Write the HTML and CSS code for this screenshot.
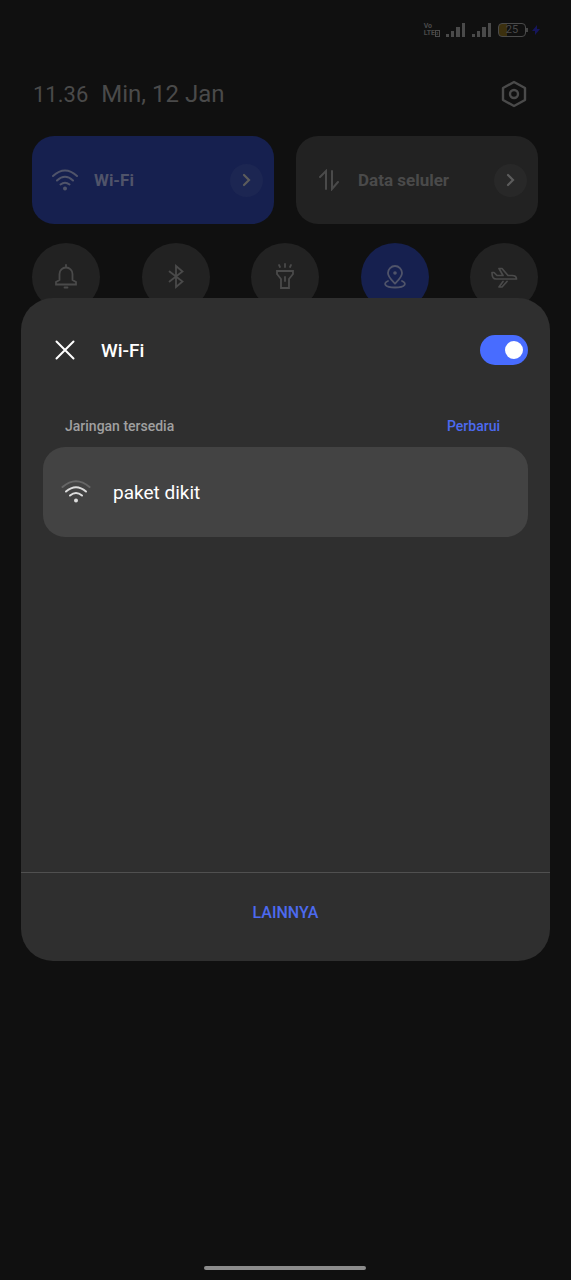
FILE: index.html
```html
<!DOCTYPE html>
<html lang="id">
<head>
<meta charset="utf-8">
<meta name="viewport" content="width=device-width, initial-scale=1">
<title>Wi-Fi</title>
<link rel="stylesheet" href="styles.css">
</head>
<body>
<main class="shade">
  <div class="status">
    <span class="volte"><span>Vo</span><span class="lte">LTE<span class="sim">2</span></span></span>
    <svg class="signal" width="20" height="16" viewBox="0 0 20 16" aria-hidden="true"><path d="M0 12h3v3H0zM5 9h3v6H5zM10 5h4v10h-4zM16 1h3v14h-3z"/></svg>
    <svg class="signal" width="20" height="16" viewBox="0 0 20 16" aria-hidden="true"><path d="M0 12h3v3H0zM5 9h3v6H5zM10 5h4v10h-4zM16 1h3v14h-3z"/></svg>
    <span class="battery"><span class="battery-value">25</span></span>
    <svg class="bolt" width="8" height="12" viewBox="0 0 8 12" aria-hidden="true"><path d="M5 1 0 7h3v4l5-6H5z"/></svg>
  </div>
  <header class="clock-row">
    <span class="clock">11.36</span>
    <span class="date">Min, 12 Jan</span>
    <button class="settings" aria-label="Setelan">
      <svg class="line" width="26" height="28" viewBox="0 0 26 28"><path stroke-width="2.4" stroke-linejoin="round" d="M13 2 24 8v12l-11 6L2 20V8z"/><circle cx="13" cy="14" r="4" stroke-width="2.4"/></svg>
    </button>
  </header>
  <div class="tiles">
    <button class="tile on">
      <svg class="line" width="26" height="22" viewBox="0 0 26 22" stroke-width="2"><path d="M1 7Q13-4 25 7M5 11.500Q13 4 21 11.500M8.500 15.500Q13 12 17.500 15.500"/><circle class="dot" cx="13" cy="19.500" r="2"/></svg>
      <span class="tile-label">Wi-Fi</span>
      <span class="more"><svg class="line" width="10" height="14" viewBox="0 0 10 14" stroke-width="2.200"><path d="m2 2 5 5-5 5"/></svg></span>
    </button>
    <button class="tile">
      <svg class="line" width="26" height="22" viewBox="0 0 26 22" stroke-width="2"><path d="m4 8 6-6v18M16 2v18l6-7"/></svg>
      <span class="tile-label">Data seluler</span>
      <span class="more"><svg class="line" width="10" height="14" viewBox="0 0 10 14" stroke-width="2.200"><path d="m2 2 5 5-5 5"/></svg></span>
    </button>
  </div>
  <div class="toggles">
    <button class="round" aria-label="Suara">
      <svg class="line" width="28" height="28" viewBox="0 0 28 28" stroke-width="1.800"><path d="M14 2v2M7.500 17v-6a6.500 6.500 0 0 1 13 0v6l3.500 2v2.500H4V19zM12.500 24.500h3"/></svg>
    </button>
    <button class="round" aria-label="Bluetooth">
      <svg class="line" width="28" height="28" viewBox="0 0 28 28" stroke-width="1.800"><path d="m7.500 8.500 13 10-6.500 5.500V3l6.500 5.500-13 10"/></svg>
    </button>
    <button class="round" aria-label="Senter">
      <svg class="line" width="28" height="28" viewBox="0 0 28 28" stroke-width="1.800"><path d="M14 1v3M8 2l1 2M20 2l-1 2M6 8h16v3l-4 5v9h-8v-9l-4-5zM14 14v4"/></svg>
    </button>
    <button class="round on" aria-label="Lokasi">
      <svg class="line" width="28" height="28" viewBox="0 0 28 28" stroke-width="1.800"><path d="M14 20.500c-4-4-7-6.500-7-10.500a7 7 0 0 1 14 0c0 4-3 6.500-7 10.500zM7 18c-5 2-4 6.500 7 6.500s12-4.500 7-6.500"/><circle class="dot" cx="14" cy="10" r="1.800"/></svg>
    </button>
    <button class="round" aria-label="Mode pesawat">
      <svg class="line" width="28" height="28" viewBox="0 0 28 28" stroke-width="1.700" stroke-linejoin="round"><path d="M2 9.500h2l3 3h6l-4-7h3l6 7h4c3 0 4.500 1.500 4.500 3.500H6c-3 0-4-2-4-6.500zM13 18.500l-4 5.500h3l5-5.500"/></svg>
    </button>
  </div>
  <span class="gesture"></span>
</main>

<section class="sheet" role="dialog" aria-labelledby="sheet-title">
  <header class="sheet-head">
    <button class="close" aria-label="Tutup"><svg class="line" width="20" height="20" viewBox="0 0 20 20" stroke-width="2"><path d="m1.500 1.500 17 17M18.500 1.500l-17 17"/></svg></button>
    <h1 class="sheet-title" id="sheet-title">Wi-Fi</h1>
    <input class="switch" type="checkbox" role="switch" aria-labelledby="sheet-title" checked>
  </header>
  <div class="networks">
    <div class="networks-head">
      <h2 class="networks-title">Jaringan tersedia</h2>
      <button class="refresh">Perbarui</button>
    </div>
    <button class="network">
      <svg class="line" width="30" height="24" viewBox="0 0 30 24" stroke-width="2"><path class="weak" d="M1.500 7Q15-4.500 28.500 7"/><path d="M5 11.500Q15 3 25 11.500M9 15.500Q15 10.500 21 15.500"/><circle class="dot" cx="15" cy="20.500" r="2"/></svg>
      <span>paket dikit</span>
    </button>
  </div>
  <footer class="sheet-foot"><button class="other">LAINNYA</button></footer>
</section>
</body>
</html>
```

FILE: styles.css
```css
* {
  box-sizing: border-box;
}

body {
  margin: 0;
  position: relative;
  background: #101010;
  color: #4a4a4a;
  font-family: Roboto, "Liberation Sans", sans-serif;
}

button {
  margin: 0;
  padding: 0;
  border: 0;
  background: none;
  color: inherit;
  font: inherit;
  cursor: pointer;
}

svg {
  display: block;
  flex: none;
}

.line {
  fill: none;
  stroke: currentColor;
  stroke-linecap: round;
}

.dot {
  fill: currentColor;
  stroke: none;
}

.shade {
  display: flex;
  flex-direction: column;
  min-height: 100vh;
  padding: 0 33px 10px 32px;
}

.status {
  display: flex;
  align-items: center;
  justify-content: flex-end;
  gap: 6px;
  height: 60px;
  margin-right: -2px;
}

.volte {
  display: flex;
  flex-direction: column;
  font-size: 7px;
  font-weight: 700;
  line-height: 7px;
}

.lte {
  display: flex;
}

.sim {
  width: 5px;
  border: 1px solid;
  font-size: 4px;
  line-height: 5px;
}

.signal {
  fill: currentColor;
}

.battery {
  position: relative;
  display: flex;
  justify-content: center;
  width: 28px;
  height: 14px;
  border: 1px solid #4a4a4a;
  border-radius: 4px;
  background: linear-gradient(90deg, #3c300e 30%, transparent 30%);
  font-size: 11px;
  line-height: 12px;
}

.battery::after {
  content: "";
  position: absolute;
  top: 4px;
  right: -3px;
  width: 2px;
  height: 4px;
  background: #444;
}

.bolt {
  fill: #16165c;
}

.clock-row {
  display: flex;
  align-items: center;
  gap: 13px;
  height: 68px;
  margin-bottom: 8px;
  padding-left: 1px;
}

.clock {
  font-size: 22px;
}

.date {
  font-size: 24px;
}

.settings {
  margin-left: auto;
  margin-right: 11px;
}

.tiles {
  display: grid;
  grid-template-columns: 1fr 1fr;
  gap: 22px;
}

.tile {
  display: flex;
  align-items: center;
  gap: 16px;
  height: 88px;
  padding: 0 11px 0 20px;
  border-radius: 22px;
  background: #222;
}

.tile-label {
  font-size: 17px;
  font-weight: 700;
}

.tile.on {
  background: #16204f;
  color: #50546a;
}

.more {
  display: grid;
  place-items: center;
  width: 33px;
  height: 33px;
  margin-left: auto;
  border-radius: 50%;
  background: rgba(128, 128, 128, 0.06);
  color: #5c5c5c;
}

.toggles {
  display: flex;
  justify-content: space-between;
  margin-top: 19px;
}

.round {
  display: grid;
  place-items: center;
  width: 68px;
  height: 68px;
  border-radius: 50%;
  background: #222;
}

.round.on {
  background: #16204f;
  color: #50546a;
}

.gesture {
  align-self: center;
  width: 162px;
  height: 4px;
  margin-top: auto;
  border-radius: 2px;
  background: #8c8c8c;
}

.sheet {
  position: absolute;
  top: 298px;
  left: 21px;
  right: 21px;
  border-radius: 32px;
  background: #2f2f2f;
  color: #fff;
}

.sheet-head {
  display: flex;
  align-items: center;
  gap: 26px;
  height: 104px;
  padding: 0 22px 0 34px;
}

.sheet-title {
  margin: 0;
  font-size: 19px;
  font-weight: 500;
}

.switch {
  appearance: none;
  display: flex;
  align-items: center;
  justify-content: flex-end;
  width: 48px;
  height: 30px;
  margin: 0 0 0 auto;
  padding: 5px;
  border-radius: 15px;
  background: #486cff;
}

.switch::before {
  content: "";
  width: 18px;
  height: 18px;
  border-radius: 50%;
  background: #fff;
}

.switch:not(:checked) {
  justify-content: flex-start;
  background: #555;
}

.networks {
  min-height: 470px;
  padding: 0 22px;
}

.networks-head {
  display: flex;
  align-items: center;
  justify-content: space-between;
  height: 45px;
  padding: 2px 28px 0 22px;
}

.networks-title {
  margin: 0;
  color: #a0a0a0;
  font-size: 14px;
  font-weight: 500;
}

.refresh {
  color: #4c6af0;
  font-size: 14px;
  font-weight: 500;
}

.network {
  display: flex;
  align-items: center;
  gap: 22px;
  width: 100%;
  height: 90px;
  padding: 0 18px;
  border-radius: 22px;
  background: #434343;
  font-size: 19px;
}

.network .line {
  color: #ddd;
}

.network .weak {
  stroke: #666;
}

.sheet-foot {
  display: grid;
  place-items: center;
  height: 89px;
  padding-bottom: 10px;
  border-top: 1px solid #505050;
}

.other {
  color: #4c6af0;
  font-size: 16px;
  font-weight: 500;
}
```
